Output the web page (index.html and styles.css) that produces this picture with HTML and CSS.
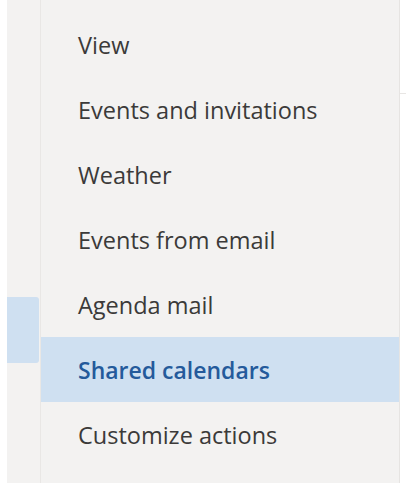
FILE: index.html
```html
<!DOCTYPE html>
<html lang="en">
<head>
<meta charset="UTF-8" />
<title>Calendar settings</title>
<link rel="stylesheet" href="styles.css">
</head>
<body>
  <div class="rail">
    <div class="rail-tab"></div>
  </div>
  <nav class="menu" aria-label="Calendar settings">
    <a class="item">View</a>
    <a class="item">Events and invitations</a>
    <a class="item">Weather</a>
    <a class="item">Events from email</a>
    <a class="item">Agenda mail</a>
    <a class="item selected">Shared calendars</a>
    <a class="item">Customize actions</a>
  </nav>
  <div class="side">
    <div class="side-line"></div>
  </div>
</body>
</html>
```

FILE: styles.css
```css
body {
  margin: 0;
  background: #fff;
  font-family: 'Open Sans', 'Noto Sans', sans-serif;
  display: flex;
  height: 484px;
  overflow: hidden;
}
.rail {
  margin-left: 7px;
  width: 34px;
  height: 483px;
  background: #f3f2f1;
  border-right: 1px solid #e9e7e5;
  padding-top: 297px;
  box-sizing: border-box;
}
.rail-tab {
  width: 32px;
  height: 66px;
  background: #cfe0f1;
  border-radius: 0 3px 3px 0;
}
.menu {
  width: 359px;
  height: 483px;
  padding-top: 12px;
  box-sizing: border-box;
  background: #f3f2f1;
  border-right: 1px solid #e6e4e2;
  display: flex;
  flex-direction: column;
}
.item {
  height: 65px;
  flex-shrink: 0;
  display: flex;
  align-items: center;
  padding-left: 37px;
  font-size: 23.5px;
  color: #3b3a39;
}
.item.selected {
  background: #cfe0f1;
  color: #245a9b;
  font-size: 23px;
  font-weight: 600;
}
.side {
  flex: 1;
  padding-top: 93px;
}
.side-line {
  height: 1px;
  background: #e8e6e4;
}
```
